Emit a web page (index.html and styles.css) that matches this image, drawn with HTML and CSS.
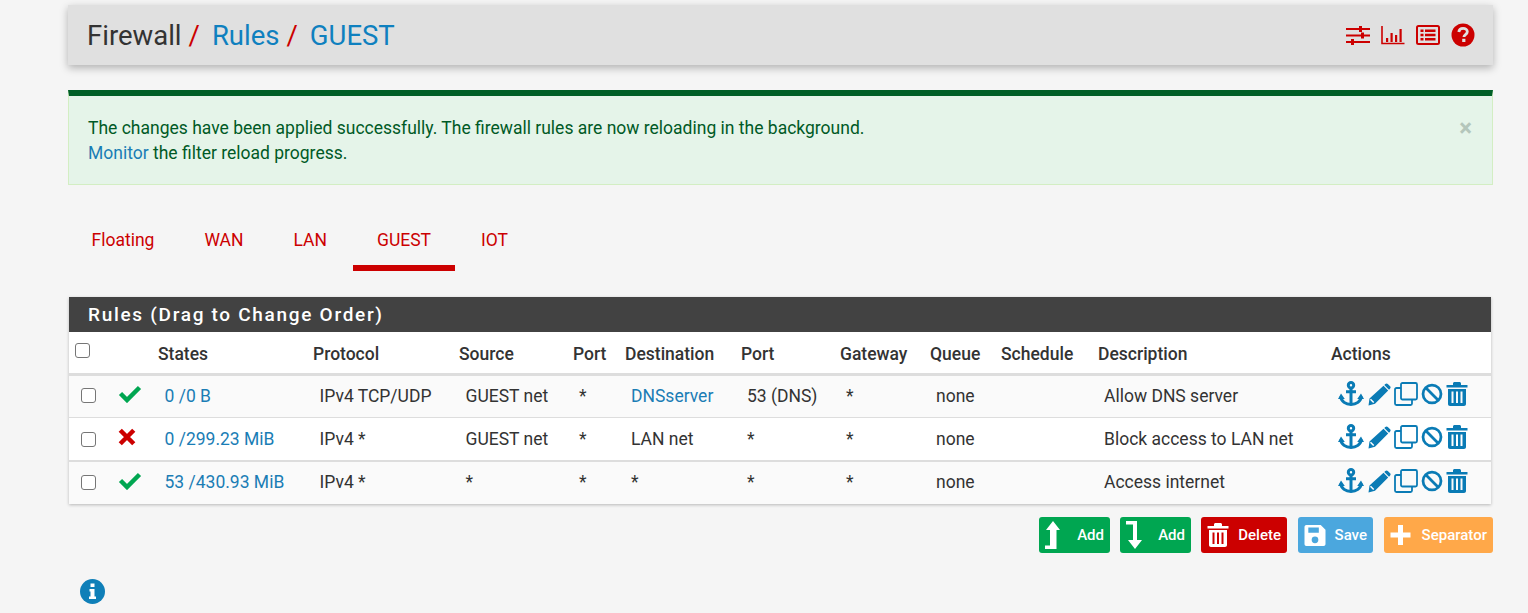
FILE: index.html
```html
<!DOCTYPE html>
<html lang="en">
<head>
<meta charset="utf-8">
<title>Firewall: Rules: GUEST</title>
<link rel="stylesheet" href="styles.css">
</head>
<body>
<svg class="defs" width="0" height="0" aria-hidden="true">
  <symbol id="i-anchor" viewBox="0 0 26 26"><g fill="none" stroke="currentColor" stroke-width="3"><circle cx="13" cy="4.2" r="2.7"/><path d="M13 7v16.5M8 10.800h10"/><path d="M2.800 15.500c.3 5 5 8 10.200 8s9.900-3 10.200-8"/></g><path d="M0 18l3-5.500 3.800 5.500zM19.200 18l3.800-5.500 3 5.500z" fill="currentColor"/></symbol>
  <symbol id="i-pencil" viewBox="0 0 24 24"><path d="M16.500 3.800l4.700 4.700L8 21.700 1.500 23.500l1-7zM18.300 2c.8-.8 1.800-.8 2.500-.1l2.300 2.300c.7.700.7 1.700-.1 2.500l-1 1-4.700-4.700z" fill="currentColor"/><path d="M3.500 17.300l3.200 3.200" stroke="#fff" stroke-width="1.500"/></symbol>
  <symbol id="i-copy" viewBox="0 0 24 24"><g fill="none" stroke="currentColor" stroke-width="1.800"><rect x="7" y="1" width="16" height="16.500" rx="1.500"/><path d="M7 6H2.500A1.500 1.500 0 0 0 1 7.500v14A1.500 1.500 0 0 0 2.500 23h14a1.500 1.500 0 0 0 1.500-1.500V17.500"/></g></symbol>
  <symbol id="i-ban" viewBox="0 0 24 24"><g fill="none" stroke="currentColor" stroke-width="3"><circle cx="12" cy="12" r="9.800"/><path d="M5.500 5.500l13 13"/></g></symbol>
  <symbol id="i-trash" viewBox="0 0 22 24"><path d="M7 1.500C7 .7 7.700 0 8.500 0h5c.8 0 1.500.7 1.500 1.500V3h6.500v2.500H.5V3H7zM2 7h18v15c0 1.200-.8 2-2 2H4c-1.200 0-2-.8-2-2zM5.500 9.500v11.500h2V9.500zM10 9.500v11.500h2V9.500zM14.500 9.500v11.500h2V9.500z" fill="currentColor" fill-rule="evenodd"/></symbol>
  <symbol id="i-check" viewBox="0 0 24 18"><path d="M2.500 8.500l6.500 6.500L21.500 2.500" fill="none" stroke="currentColor" stroke-width="4.500"/></symbol>
  <symbol id="i-cross" viewBox="0 0 16 16"><path d="M2 2l12 12M14 2L2 14" fill="none" stroke="currentColor" stroke-width="4"/></symbol>
</svg>

<main class="page">
  <header class="topbar">
    <h1 class="crumbs">
      <span>Firewall</span><span class="sep">/</span><a href="#">Rules</a><span class="sep">/</span><a href="#">GUEST</a>
    </h1>
    <div class="tools">
      <svg class="tool" width="24" height="22" viewBox="0 0 24 22"><g fill="none" stroke="currentColor" stroke-width="2.200"><path d="M0 5h24M0 11.500h24M0 18h24"/></g><path d="M13 2h3v6h-3zM15 8.500h3v6h-3zM5 15h3v6H5z" fill="currentColor"/></svg>
      <svg class="tool" width="24" height="22" viewBox="0 0 24 22"><path d="M1 2v17.500h22.500" fill="none" stroke="currentColor" stroke-width="1.600"/><path d="M5 14h2.200v4H5zM9.500 9h2.200v9H9.500zM14 11h2.200v7H14zM18.500 5h2.200v13h-2.200z" fill="currentColor"/></svg>
      <svg class="tool" width="24" height="22" viewBox="0 0 24 22"><rect x="1" y="2" width="22" height="18" rx="1.500" fill="none" stroke="currentColor" stroke-width="2"/><path d="M4.500 5.500h3v2.500h-3zM4.500 9.800h3v2.500h-3zM4.500 14h3v2.500h-3zM9 5.500h10.500v2.500H9zM9 9.800h10.500v2.500H9zM9 14h10.500v2.500H9z" fill="currentColor"/></svg>
      <svg class="tool" width="24" height="24" viewBox="0 0 24 24"><circle cx="12" cy="12" r="11.500" fill="currentColor"/><path d="M7.800 9c.3-2.600 2.100-3.600 4.300-3.600 2.400 0 4.200 1.400 4.200 3.400 0 2.900-3.400 2.800-3.400 5.200" fill="none" stroke="#e0e0e0" stroke-width="2.800"/><path d="M11.200 15.800h3.200V19h-3.200z" fill="#e0e0e0"/></svg>
    </div>
  </header>

  <section class="alert">
    <button class="close" type="button" aria-label="Close">×</button>
    <p>The changes have been applied successfully. The firewall rules are now reloading in the background.</p>
    <p><a href="#">Monitor</a> the filter reload progress.</p>
  </section>

  <nav class="tabs">
    <a class="tab" href="#">Floating</a>
    <a class="tab" href="#">WAN</a>
    <a class="tab" href="#">LAN</a>
    <a class="tab active" href="#">GUEST</a>
    <a class="tab" href="#">IOT</a>
  </nav>

  <section class="panel">
    <h2 class="panel-title">Rules (Drag to Change Order)</h2>
    <table class="rules">
      <colgroup>
        <col class="c-check"><col class="c-status"><col class="c-states"><col class="c-proto"><col class="c-src"><col class="c-port"><col class="c-dest"><col class="c-dport"><col class="c-gw"><col class="c-queue"><col class="c-sched"><col class="c-desc"><col class="c-act">
      </colgroup>
      <thead>
        <tr>
          <th class="th-check"><input type="checkbox"></th><th></th><th>States</th><th>Protocol</th><th>Source</th><th>Port</th><th>Destination</th><th>Port</th><th>Gateway</th><th>Queue</th><th>Schedule</th><th>Description</th><th>Actions</th>
        </tr>
      </thead>
      <tbody>
        <tr>
          <td class="td-check"><input type="checkbox"></td>
          <td class="td-status"><svg class="st ok" width="24" height="18"><use href="#i-check"/></svg></td>
          <td><a href="#">0 /0 B</a></td><td>IPv4 TCP/UDP</td><td>GUEST net</td><td>*</td><td><a href="#">DNSserver</a></td><td>53 (DNS)</td><td>*</td><td>none</td><td></td><td>Allow DNS server</td>
          <td class="td-act"><svg width="26" height="26"><use href="#i-anchor"/></svg><svg width="24" height="24"><use href="#i-pencil"/></svg><svg width="24" height="24"><use href="#i-copy"/></svg><svg width="22" height="22"><use href="#i-ban"/></svg><svg width="22" height="24"><use href="#i-trash"/></svg></td>
        </tr>
        <tr>
          <td class="td-check"><input type="checkbox"></td>
          <td class="td-status"><svg class="st bad" width="18" height="18"><use href="#i-cross"/></svg></td>
          <td><a href="#">0 /299.23 MiB</a></td><td>IPv4 *</td><td>GUEST net</td><td>*</td><td>LAN net</td><td>*</td><td>*</td><td>none</td><td></td><td>Block access to LAN net</td>
          <td class="td-act"><svg width="26" height="26"><use href="#i-anchor"/></svg><svg width="24" height="24"><use href="#i-pencil"/></svg><svg width="24" height="24"><use href="#i-copy"/></svg><svg width="22" height="22"><use href="#i-ban"/></svg><svg width="22" height="24"><use href="#i-trash"/></svg></td>
        </tr>
        <tr>
          <td class="td-check"><input type="checkbox"></td>
          <td class="td-status"><svg class="st ok" width="24" height="18"><use href="#i-check"/></svg></td>
          <td><a href="#">53 /430.93 MiB</a></td><td>IPv4 *</td><td>*</td><td>*</td><td>*</td><td>*</td><td>*</td><td>none</td><td></td><td>Access internet</td>
          <td class="td-act"><svg width="26" height="26"><use href="#i-anchor"/></svg><svg width="24" height="24"><use href="#i-pencil"/></svg><svg width="24" height="24"><use href="#i-copy"/></svg><svg width="22" height="22"><use href="#i-ban"/></svg><svg width="22" height="24"><use href="#i-trash"/></svg></td>
        </tr>
      </tbody>
    </table>
  </section>

  <div class="buttons">
    <button class="btn green w-add" type="button"><svg width="16" height="28" viewBox="0 0 16 28"><path d="M8 0l7 9h-3.500v19H0v-3.500h5V9H1z" fill="currentColor"/></svg><span>Add</span></button>
    <button class="btn green w-add" type="button"><svg width="16" height="28" viewBox="0 0 16 28"><path d="M0 0h11v19h5l-7 9-7-9h5V3.500H0z" fill="currentColor"/></svg><span>Add</span></button>
    <button class="btn red w-del" type="button"><svg width="22" height="24"><use href="#i-trash"/></svg><span>Delete</span></button>
    <button class="btn blue w-save" type="button"><svg width="22" height="21" viewBox="0 0 22 22"><path d="M2 0h15l5 5v15c0 1.200-.8 2-2 2H2c-1.200 0-2-.8-2-2V2C0 .8.800 0 2 0zm2 2.500v5.500h11V2.500zM11 12a3.500 3.500 0 1 0 0 7 3.500 3.500 0 0 0 0-7z" fill="currentColor" fill-rule="evenodd"/></svg><span>Save</span></button>
    <button class="btn orange w-sep" type="button"><svg width="21" height="20" viewBox="0 0 20 20"><path d="M7.500 0h5v7.500H20v5h-7.500V20h-5v-7.500H0v-5h7.500z" fill="currentColor"/></svg><span>Separator</span></button>
  </div>

  <svg class="info" width="25" height="25" viewBox="0 0 25 25"><circle cx="12.500" cy="12.500" r="12.500" fill="#0f7fb8"/><path d="M10.500 4.500h4v3.500h-4zM9.500 10h5v7.500h1.500V20H9v-2.500h1.500V12.500h-1z" fill="#fff"/></svg>
</main>
</body>
</html>
```

FILE: styles.css
```css
* { box-sizing: border-box; }
html, body { margin: 0; padding: 0; }
body {
  background: #f5f5f5;
  color: #212121;
  font-family: Roboto, "Liberation Sans", sans-serif;
  font-size: 17.5px;
  height: 613px;
  overflow: hidden;
}
a { color: #1a7db5; text-decoration: none; }
.defs { position: absolute; }
.page { width: 1425px; margin-left: 68px; padding-top: 5px; }

.topbar {
  height: 60px;
  background: #e0e0e0;
  box-shadow: 0 3px 8px rgba(0, 0, 0, .28);
  display: flex;
  align-items: center;
  justify-content: space-between;
  padding: 0 18px 0 19px;
}
.crumbs { margin: 0; font-size: 27.5px; font-weight: 400; color: #333; }
.crumbs a { color: #0f80bf; }
.sep { color: #c00; margin: 0 12px 0 7px; }
.tools { display: flex; align-items: center; gap: 11px; color: #c00; }
.tool { display: block; }

.alert {
  position: relative;
  margin-top: 25px;
  height: 95px;
  background: #e5f4e9;
  border: 1px solid #d3eec3;
  border-top: 6px solid #005f27;
  color: #005a26;
  padding: 20px 19px 0;
  line-height: 25px;
}
.alert p { margin: 0; }
.close {
  position: absolute;
  top: 20px;
  right: 20px;
  padding: 0;
  border: 0;
  background: none;
  color: #b4c6bb;
  font: 700 24px/24px Roboto, sans-serif;
}

.tabs { display: flex; gap: 3px; height: 86px; padding-top: 32px; }
.tab {
  color: #c00;
  padding: 13px 23.5px 0;
  height: 54px;
  border-bottom: 6px solid transparent;
}
.tab.active { border-bottom-color: #c00; }

.panel {
  margin: 26px 2px 0 1px;
  background: #fff;
  box-shadow: 0 1px 3px rgba(0, 0, 0, .25);
}
.panel-title {
  margin: 0;
  height: 35px;
  background: #424242;
  color: #fff;
  font-size: 19px;
  font-weight: 500;
  letter-spacing: 1.7px;
  line-height: 36px;
  padding-left: 19px;
}
.rules { width: 1422px; table-layout: fixed; border-collapse: separate; border-spacing: 0; }
.c-check { width: 43px; } .c-status { width: 46px; } .c-states { width: 155px; }
.c-proto { width: 146px; } .c-src { width: 114px; } .c-port { width: 52px; }
.c-dest { width: 116px; } .c-dport { width: 99px; } .c-gw { width: 90px; }
.c-queue { width: 71px; } .c-sched { width: 97px; } .c-desc { width: 233px; } .c-act { width: 160px; }
.rules th {
  height: 44px;
  padding: 3px 0 0;
  text-align: left;
  font-weight: 500;
  font-size: 17.5px;
  color: #333;
  border-bottom: 3px solid #ddd;
}
.rules td { height: 42px; padding: 0 0 0 6.5px; background: #fafafa; color: #333; border-bottom: 1px solid #ddd; }
.rules td:nth-child(n+6) { padding-left: 6px; }
.rules tbody tr:nth-child(2) td { height: 44px; background: #fff; border-bottom: 2px solid #ddd; }
.rules tbody tr:last-child td { border-bottom: 0; }
.rules tbody tr:nth-child(odd) td { padding-bottom: 2px; }
input[type=checkbox] {
  appearance: none;
  display: block;
  width: 15px;
  height: 15px;
  margin: 0;
  background: #fff;
  border: 1px solid #767676;
  border-radius: 3px;
}
.th-check input { margin: -7px 0 0 6px; }
.rules td.td-check { padding-left: 0; }
.td-check input { margin-left: 12px; }
.rules tbody tr td.td-status { padding: 0 0 0 6px; }
.td-status svg { display: block; margin-top: -5px; }
.ok { color: #00a651; }
.bad { color: #c00; }
.rules tbody tr td.td-act { color: #0a7bb5; padding: 0 0 5px 7px; white-space: nowrap; }
.td-act svg { display: inline-block; vertical-align: middle; margin-right: 3px; }

.buttons { display: flex; justify-content: flex-end; gap: 10px; margin-top: 13px; }
.btn {
  height: 36px;
  border: 0;
  border-radius: 3px;
  color: #fff;
  font: 500 15px Roboto, sans-serif;
  display: flex;
  align-items: center;
  justify-content: space-between;
  padding: 0 6px;
}
.w-add { width: 71px; }
.w-del { width: 86px; }
.w-save { width: 75px; margin-left: 1px; }
.w-sep { width: 109px; margin-left: 1px; }
.green { background: #00a651; }
.red { background: #c00; }
.blue { background: #4ba7de; }
.orange { background: #ffa849; }

.info { display: block; margin: 26px 0 0 12px; }
```
